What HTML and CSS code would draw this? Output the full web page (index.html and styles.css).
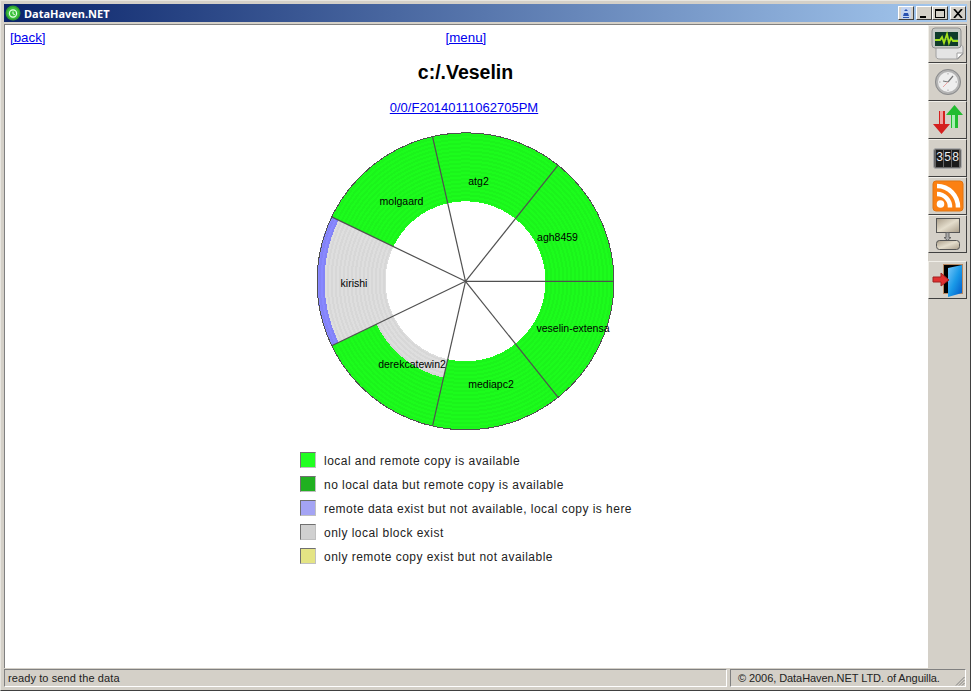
FILE: index.html
```html
<!DOCTYPE html>
<html lang="en">
<head>
<meta charset="utf-8">
<title>DataHaven.NET</title>
<link rel="stylesheet" href="styles.css">
</head>
<body>
<div class="window">
  <header class="titlebar">
    <svg class="app-icon" width="16" height="16" viewBox="0 0 16 16">
      <circle cx="8" cy="8" r="7.5" fill="#2f9e2f"/>
      <circle cx="8" cy="8" r="6" fill="#3fc23f"/>
      <circle cx="8" cy="8.5" r="3.6" fill="none" stroke="#e8ffe8" stroke-width="1.2"/>
      <path d="M8 6.5v2.4l1.8 .8" fill="none" stroke="#e8ffe8"/>
    </svg>
    <span class="app-title">DataHaven.NET</span>
    <div class="win-buttons">
      <button class="win-btn win-btn-icon" type="button" aria-label="tray">
        <svg width="12" height="12" viewBox="0 0 12 12"><rect x="1" y="0" width="10" height="12" rx="2" fill="#c4d4f0"/><path d="M4 4l2-2 2 2zM3 9l1-3h4l1 3zM3 10h6v1H3z" fill="#2a52b0"/></svg>
      </button>
      <button class="win-btn" type="button" aria-label="minimize"><span class="glyph-min"></span></button>
      <button class="win-btn" type="button" aria-label="maximize"><span class="glyph-max"></span></button>
      <button class="win-btn win-btn-close" type="button" aria-label="close">
        <svg width="10" height="9" viewBox="0 0 10 9"><path d="M1 0l8 9M9 0L1 9" fill="none" stroke="#000" stroke-width="1.7"/></svg>
      </button>
    </div>
  </header>

  <div class="body-row">
    <main class="content">
      <nav class="top-links">
        <a href="#">[back]</a>
        <a class="menu-link" href="#">[menu]</a>
      </nav>
      <h1 class="heading">c:/.Veselin</h1>
      <p class="file-link"><a href="#">0/0/F20140111062705PM</a></p>

      <svg class="chart" width="300" height="300" viewBox="-150.5 -150.3 300 300">
        <circle r="114.5" class="ring ring-green"/>
        <path class="ring ring-grey-wide" d="M-103.1 -49.7A114.5 114.5 0 0 0 -103.1 49.7"/>
        <path class="ring ring-blue" d="M-130.6 -62.9A145 145 0 0 0 -130.6 62.9"/>
        <path class="ring ring-grey-narrow" d="M-80.5 38.8A89.4 89.4 0 0 0 -19.9 87.2"/>
        <g class="bands">
          <circle r="82"/><circle r="86"/><circle r="90"/><circle r="94"/><circle r="98"/>
          <circle r="102"/><circle r="106"/><circle r="110"/><circle r="114"/><circle r="118"/>
          <circle r="122"/><circle r="126"/><circle r="130"/><circle r="134"/><circle r="138"/>
          <circle r="142"/><circle r="146"/>
        </g>
        <circle r="148.5" class="outline"/>
        <g class="spokes">
          <path d="M0 0H148.5"/>
          <path d="M0 0L92.6 116.1"/>
          <path d="M0 0L-33 144.8"/>
          <path d="M0 0L-133.8 64.4"/>
          <path d="M0 0L-133.8 -64.4"/>
          <path d="M0 0L-33 -144.8"/>
          <path d="M0 0L92.6 -116.1"/>
        </g>
        <g class="chart-labels">
          <text x="107.5" y="50.5">veselin-extensa</text>
          <text x="25.5" y="106.5">mediapc2</text>
          <text x="-53.5" y="86.5">derekcatewin2</text>
          <text x="-111.5" y="5.5">kirishi</text>
          <text x="-64" y="-76.5">molgaard</text>
          <text x="13" y="-96.5">atg2</text>
          <text x="92" y="-40.5">agh8459</text>
        </g>
      </svg>

      <ul class="legend">
        <li><span class="swatch sw-green"></span>local and remote copy is available</li>
        <li><span class="swatch sw-dark"></span>no local data but remote copy is available</li>
        <li><span class="swatch sw-blue"></span>remote data exist but not available, local copy is here</li>
        <li><span class="swatch sw-grey"></span>only local block exist</li>
        <li><span class="swatch sw-yellow"></span>only remote copy exist but not available</li>
      </ul>
    </main>

    <aside class="toolbar">
      <button class="tool" type="button" aria-label="monitor">
        <svg width="34" height="34" viewBox="0 0 34 34">
          <path d="M5 18h24c2 0 3 1 3 3v6l-5 5H9c-3 0-4-1-4-3z" fill="#e4e4e4" stroke="#a0a0a0"/>
          <path d="M26 32v-6h6z" fill="#fff" stroke="#a0a0a0"/>
          <rect x="1" y="1" width="29" height="20" rx="3" fill="#c4c8c4" stroke="#8e8e8e"/>
          <rect x="4" y="5" width="23" height="14" fill="#0e3b2a"/>
          <rect x="4" y="12" width="23" height="1" fill="#2a6b50"/>
          <path d="M4 13h5l2-3 2 6 3-9 2 9 2-5 2 3h5" fill="none" stroke="#a4e21e" stroke-width="1.8"/>
        </svg>
      </button>
      <button class="tool" type="button" aria-label="clock">
        <svg width="30" height="30" viewBox="0 0 30 30">
          <circle cx="15" cy="15" r="13" fill="#b4b4b4"/>
          <circle cx="15" cy="15" r="12.500" fill="none" stroke="#8a8a8a"/>
          <circle cx="15" cy="15" r="10" fill="#eeeeee"/>
          <path d="M15 15l5-6M15 15l-5-1" stroke="#777" stroke-width="1.200"/>
          <path d="M15 15l-5 5" stroke="#e9a3a3"/>
          <path d="M15 6v1.500M15 22.500v1.500M6 15h1.500M22.500 15H24" stroke="#aaa"/>
        </svg>
      </button>
      <button class="tool" type="button" aria-label="traffic">
        <svg width="32" height="32" viewBox="0 0 32 32">
          <path d="M7 7h6v13h5l-8.500 10L1 20h6z" fill="#d42020"/>
          <path d="M8 7h3v13H8z" fill="#f0a0a0"/>
          <path d="M19 24h7V11h5L22.500 1 14 11h5z" fill="#22bc30"/>
          <path d="M20 11h3v13h-3z" fill="#a8f0b4"/>
        </svg>
      </button>
      <button class="tool" type="button" aria-label="counter">
        <span class="counter"><span>3</span><span>5</span><span>8</span></span>
      </button>
      <button class="tool" type="button" aria-label="rss">
        <svg width="32" height="32" viewBox="0 0 32 32">
          <rect x="1" y="1" width="30" height="30" rx="3" fill="#fb8012" stroke="#e07410"/>
          <circle cx="8.500" cy="24" r="3.800" fill="#fff"/>
          <path d="M5 14a13 13 0 0 1 13 13.500" fill="none" stroke="#fff" stroke-width="4.500"/>
          <path d="M5 6a21 21 0 0 1 21 21.500" fill="none" stroke="#fff" stroke-width="4.500"/>
        </svg>
      </button>
      <button class="tool" type="button" aria-label="diagram">
        <svg width="26" height="34" viewBox="0 0 26 34">
          <defs><linearGradient id="dg" x1="0" y1="0" x2="1" y2="1"><stop offset="0" stop-color="#a89c88"/><stop offset=".5" stop-color="#e4ddcc"/><stop offset="1" stop-color="#a89c88"/></linearGradient></defs>
          <rect x="1.500" y="1.500" width="23" height="14" fill="url(#dg)" stroke="#555"/>
          <path d="M11 15.500h3v5h2l-3.500 3-3.500-3h2z" fill="#aaa" stroke="#666"/>
          <rect x="1.500" y="23.500" width="23" height="9" rx="3" fill="url(#dg)" stroke="#555"/>
        </svg>
      </button>
      <button class="tool tool-exit" type="button" aria-label="exit">
        <svg width="34" height="34" viewBox="0 0 34 34">
          <defs><linearGradient id="door" x1="0" y1="0" x2="1" y2="1"><stop offset="0" stop-color="#7cc8f8"/><stop offset=".5" stop-color="#1a9ae8"/><stop offset="1" stop-color="#0058c8"/></linearGradient></defs>
          <rect x="12.500" y="1.500" width="19" height="29" fill="#000" stroke="#b88860"/>
          <path d="M17 5l14-3v28l-14 4z" fill="url(#door)"/>
          <path d="M2 14h8v-4l8 7-8 6v-4H2z" fill="#e03030" stroke="#a02020"/>
        </svg>
      </button>
    </aside>
  </div>

  <footer class="statusbar">
    <div class="status-main">ready to send the data</div>
    <div class="status-copy">© 2006, DataHaven.NET LTD. of Anguilla.
      <svg class="grip" width="10" height="10" viewBox="0 0 10 10"><path d="M9.500 1L1 9.500M9.500 4L4 9.500M9.500 7L7 9.500" stroke="#808080" fill="none"/></svg>
    </div>
  </footer>
</div>
</body>
</html>
```
FILE: styles.css
```css
* { box-sizing: border-box; }
html, body { margin: 0; height: 100%; }
body { background: #d4d0c8; overflow: hidden; font-family: "Liberation Sans", Arial, sans-serif; }

.window {
  width: 971px;
  height: 691px;
  display: flex;
  flex-direction: column;
  padding: 3px;
  background: #d4d0c8;
  border: 1px solid;
  border-color: #e8e6e0 #404040 #404040 #e8e6e0;
}

.titlebar {
  flex: none;
  height: 18px;
  display: flex;
  align-items: center;
  padding-left: 1px;
  background: linear-gradient(to right, #0a246a, #a6caf0);
}
.app-icon { flex: none; }
.app-title {
  margin-left: 3px;
  color: #fff;
  font: bold 11px "Noto Sans", sans-serif;
}
.win-buttons { margin-left: auto; margin-right: 1px; display: flex; }
.win-btn {
  width: 16px;
  height: 14px;
  padding: 0;
  display: flex;
  align-items: center;
  justify-content: center;
  background: #d4d0c8;
  border: 1px solid;
  border-color: #fff #404040 #404040 #fff;
}
.win-btn-icon { margin-right: 2px; }
.win-btn-close { margin-left: 2px; }
.glyph-min { width: 6px; height: 2px; background: #000; margin-top: 7px; margin-right: 2px; }
.glyph-max { width: 10px; height: 9px; border: 1px solid #000; border-top-width: 2px; }

.body-row {
  flex: 1;
  min-height: 0;
  display: flex;
  margin-top: 2px;
  border-top: 1px solid #808080;
  border-left: 1px solid #808080;
}
.content {
  flex: 1;
  min-width: 0;
  background: #fff;
  text-align: center;
}
.top-links {
  display: flex;
  justify-content: flex-start;
  padding: 5px 0 0 5px;
  font-size: 13.333px;
  line-height: 16px;
}
.menu-link { margin-left: 400px; }
a { color: #0000ee; }
.heading {
  margin: 14px 0 0;
  padding-right: 2px;
  font-size: 19.500px;
  line-height: 24px;
  font-weight: bold;
  color: #000;
}
.file-link {
  margin: 16px 0 0;
  padding-right: 5px;
  font-size: 13px;
  line-height: 16px;
}
.chart {
  display: block;
  margin: 15px 0 0 310px;
}
.ring { fill: none; shape-rendering: crispEdges; }
.ring-green { stroke: #1cfc1c; stroke-width: 69; }
.ring-grey-wide { stroke: #dedede; stroke-width: 69; }
.ring-grey-narrow { stroke: #dedede; stroke-width: 19; }
.ring-blue { stroke: #8888ff; stroke-width: 8; }
.bands circle { fill: none; stroke: #000; stroke-opacity: 0.03; stroke-width: 2; shape-rendering: crispEdges; }
.outline { fill: none; stroke: #505050; stroke-width: 1; shape-rendering: crispEdges; }
.spokes path { stroke: #505050; stroke-width: 1.2; fill: none; }
.chart-labels text {
  font: 10.5px "Liberation Sans", Arial, sans-serif;
  fill: #000;
  text-anchor: middle;
}

.legend {
  list-style: none;
  margin: 17px 0 0 295px;
  padding: 0;
  text-align: left;
  font-size: 12px;
  line-height: 16px;
  letter-spacing: 0.47px;
  color: #222;
}
.legend li { display: flex; align-items: center; height: 24px; padding-top: 1px; }
.swatch {
  flex: none;
  width: 16px;
  height: 16px;
  margin: -1px 8px 0 0;
  border: 1px solid;
  border-color: #707070 #c0c0c0 #c0c0c0 #707070;
}
.sw-green { background: #20ff20; }
.sw-dark { background: #20b020; }
.sw-blue { background: #a4a4f4; }
.sw-grey { background: #d0d0d0; }
.sw-yellow { background: #e4e484; }

.toolbar {
  flex: none;
  width: 39px;
  display: flex;
  flex-direction: column;
  background: #d4d0c8;
}
.tool {
  flex: none;
  width: 39px;
  height: 38px;
  padding: 0;
  display: flex;
  align-items: center;
  justify-content: center;
  background: #d4d0c8;
  border: 1px solid;
  border-color: #f0eee8 #404040 #404040 #f0eee8;
}
.tool-exit { margin-top: 8px; }
.counter {
  display: flex;
  gap: 1px;
  padding: 1px 2px;
  background: #666;
  border: 1px solid #aaa;
  border-radius: 3px;
}
.counter span {
  width: 7px;
  height: 17px;
  background: #1a1a1a;
  font: 12px/17px "Liberation Mono", monospace;
  color: #eee;
  text-align: center;
}

.statusbar {
  flex: none;
  height: 18px;
  display: flex;
  gap: 3px;
  margin-top: 1px;
  margin-right: 1px;
  font: 11px/16px "Liberation Sans", Arial, sans-serif;
  color: #222;
}
.status-main, .status-copy {
  border: 1px solid;
  border-color: #808080 #fff #fff #808080;
  padding-left: 3px;
  white-space: nowrap;
}
.status-main { flex: 1; letter-spacing: 0.1px; }
.status-copy { width: 236px; padding-left: 7px; position: relative; letter-spacing: -0.07px; }
.grip { position: absolute; right: 0; bottom: 0; }
```
